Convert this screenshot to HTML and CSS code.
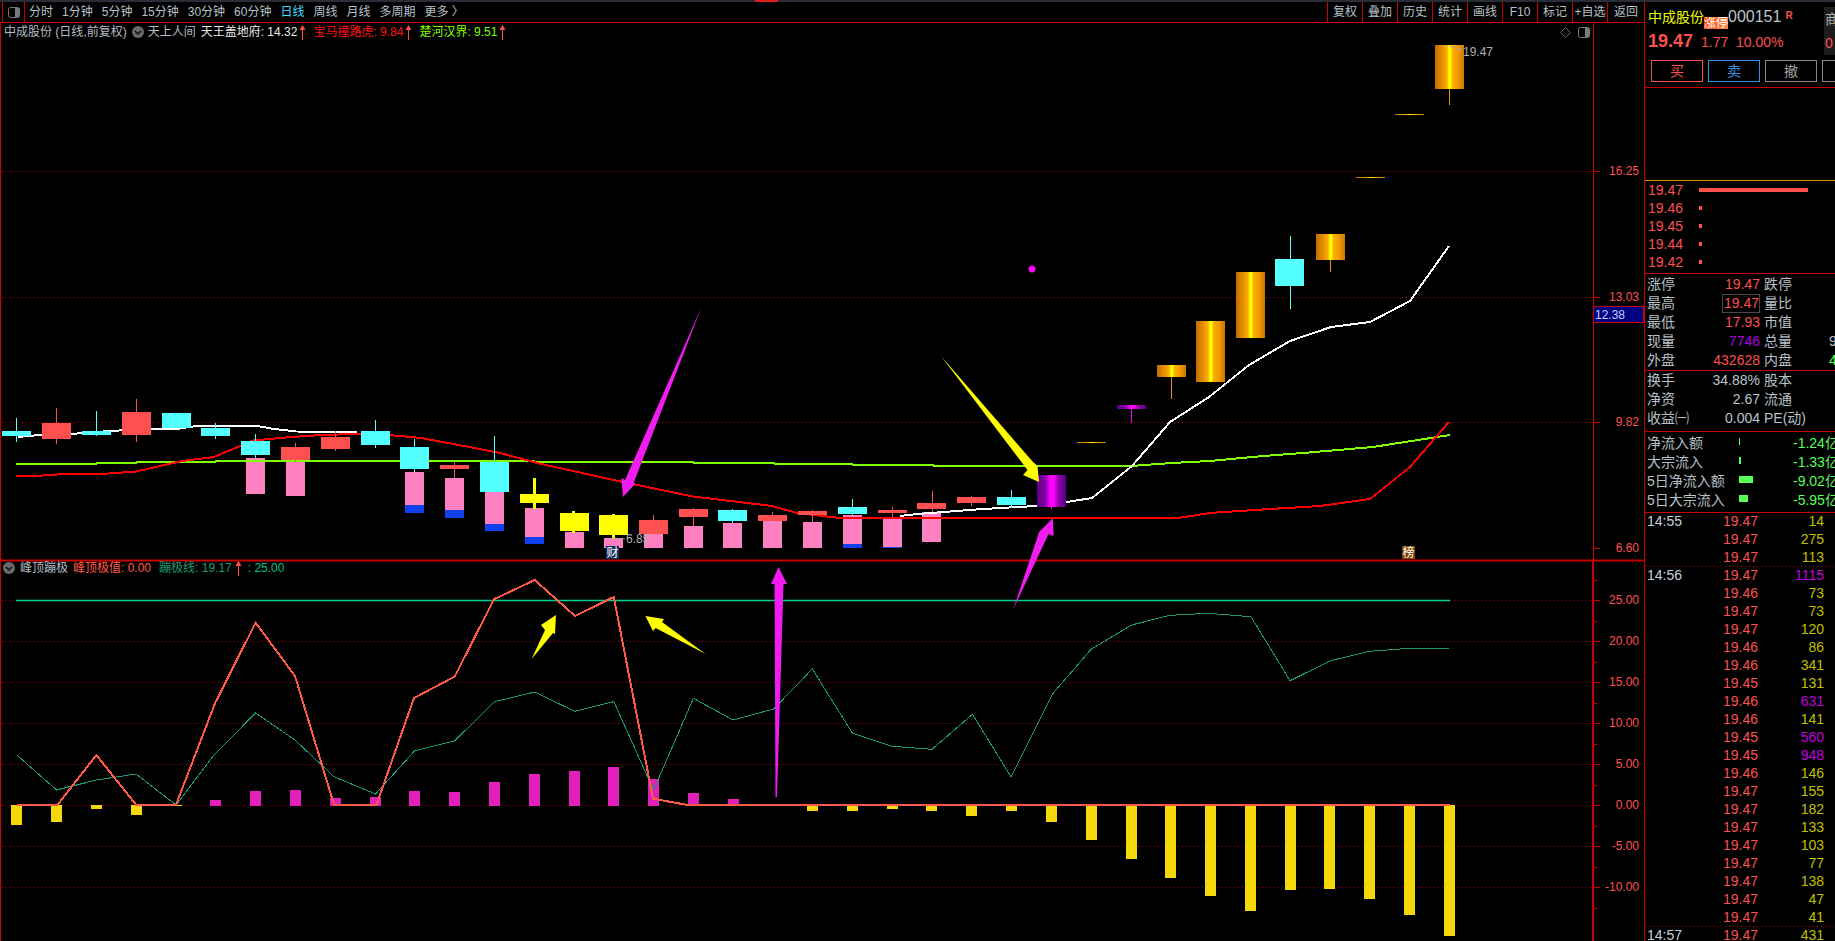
FILE: index.html
```html
<!DOCTYPE html>
<html lang="zh">
<head>
<meta charset="utf-8">
<title>中成股份 日线</title>
<link rel="stylesheet" href="styles.css">
</head>
<body>
<div class="app">
  <div class="stripe"><span class="stripe-mark"></span></div>
  <div class="main">
    <div class="left">
      <nav class="toolbar">
        <span class="tool-icon">
          <svg width="12" height="11" viewBox="0 0 12 11"><rect x="0.5" y="0.5" width="11" height="10" rx="2" fill="none" stroke="#7a7a7a"/><rect x="7" y="1" width="4" height="9" fill="#7a7a7a"/></svg>
        </span>
        <div class="periods">
          <span>分时</span><span>1分钟</span><span>5分钟</span><span>15分钟</span><span>30分钟</span><span>60分钟</span><span class="active">日线</span><span>周线</span><span>月线</span><span>多周期</span><span>更多 〉</span>
        </div>
        <div class="actions">
          <span>复权</span><span>叠加</span><span>历史</span><span>统计</span><span>画线</span><span>F10</span><span>标记</span><span>+自选</span><span>返回</span>
        </div>
      </nav>
      <div class="chart">
        <svg class="plot" width="1644" height="918" viewBox="0 23 1644 918" xmlns="http://www.w3.org/2000/svg">
          <defs>
            <linearGradient id="gold" x1="0" x2="1" y1="0" y2="0">
              <stop offset="0" stop-color="#c06c00"/><stop offset="0.25" stop-color="#e89000"/><stop offset="0.42" stop-color="#ffb000"/><stop offset="0.48" stop-color="#ffff00"/><stop offset="0.54" stop-color="#ffff00"/><stop offset="0.6" stop-color="#ffb000"/><stop offset="0.8" stop-color="#f09800"/><stop offset="1" stop-color="#c87800"/>
            </linearGradient>
            <linearGradient id="violet" x1="0" x2="1" y1="0" y2="0">
              <stop offset="0" stop-color="#560088"/><stop offset="0.3" stop-color="#8a00a8"/><stop offset="0.45" stop-color="#ff00ff"/><stop offset="0.58" stop-color="#ff00ff"/><stop offset="0.75" stop-color="#8a00a8"/><stop offset="1" stop-color="#560088"/>
            </linearGradient>
          </defs>

          <g class="dots">
            <line x1="2" x2="1593" y1="171.5" y2="171.5"/><line x1="2" x2="1593" y1="297.5" y2="297.5"/><line x1="2" x2="1593" y1="422.5" y2="422.5"/>
            <line x1="2" x2="1593" y1="600.5" y2="600.5"/><line x1="2" x2="1593" y1="641.5" y2="641.5"/><line x1="2" x2="1593" y1="682.5" y2="682.5"/><line x1="2" x2="1593" y1="723.5" y2="723.5"/><line x1="2" x2="1593" y1="764.5" y2="764.5"/><line x1="2" x2="1593" y1="805.5" y2="805.5"/><line x1="2" x2="1593" y1="846.5" y2="846.5"/><line x1="2" x2="1593" y1="887.5" y2="887.5"/>
          </g>

          <g class="frame">
            <line x1="0.5" x2="0.5" y1="23" y2="941"/>
            <line x1="1593.5" x2="1593.5" y1="23" y2="560"/>
            <line x1="1593" x2="1593" y1="560" y2="941" stroke-width="2"/>
            <line x1="0" x2="1644" y1="560.5" y2="560.5" stroke-width="2"/>
            <line x1="1594" x2="1600" y1="171.5" y2="171.5"/><line x1="1594" x2="1600" y1="297.5" y2="297.5"/><line x1="1594" x2="1600" y1="422.5" y2="422.5"/><line x1="1594" x2="1600" y1="548.5" y2="548.5"/>
            <line x1="1594" x2="1600" y1="600.5" y2="600.5"/><line x1="1594" x2="1600" y1="641.5" y2="641.5"/><line x1="1594" x2="1600" y1="682.5" y2="682.5"/><line x1="1594" x2="1600" y1="723.5" y2="723.5"/><line x1="1594" x2="1600" y1="764.5" y2="764.5"/><line x1="1594" x2="1600" y1="805.5" y2="805.5"/><line x1="1594" x2="1600" y1="846.5" y2="846.5"/><line x1="1594" x2="1600" y1="887.5" y2="887.5"/>
            <line x1="1594" x2="1597" y1="580.5" y2="580.5"/><line x1="1594" x2="1597" y1="621.5" y2="621.5"/><line x1="1594" x2="1597" y1="662.5" y2="662.5"/><line x1="1594" x2="1597" y1="703.5" y2="703.5"/><line x1="1594" x2="1597" y1="744.5" y2="744.5"/><line x1="1594" x2="1597" y1="785.5" y2="785.5"/><line x1="1594" x2="1597" y1="826.5" y2="826.5"/><line x1="1594" x2="1597" y1="867.5" y2="867.5"/><line x1="1594" x2="1597" y1="908.5" y2="908.5"/>
          </g>

          <g class="axis">
            <text x="1639" y="175">16.25</text><text x="1639" y="301">13.03</text><text x="1639" y="426">9.82</text><text x="1639" y="552">6.60</text>
            <text x="1639" y="604">25.00</text><text x="1639" y="645">20.00</text><text x="1639" y="686">15.00</text><text x="1639" y="727">10.00</text><text x="1639" y="768">5.00</text><text x="1639" y="809">0.00</text><text x="1639" y="850">-5.00</text><text x="1639" y="891">-10.00</text>
          </g>
          <rect class="last-box" x="1593.5" y="306.5" width="50" height="16"/>
          <text class="last-text" x="1595" y="319">12.38</text>

          <g class="pink">
            <rect x="246" y="458" width="19" height="36"/><rect x="286" y="462" width="19" height="34"/><rect x="405" y="472" width="19" height="33"/><rect x="445" y="478" width="19" height="32"/><rect x="485" y="492" width="19" height="32"/><rect x="525" y="508" width="19" height="29"/><rect x="565" y="532" width="19" height="16"/><rect x="604" y="538" width="19" height="10"/><rect x="644" y="534" width="19" height="14"/><rect x="684" y="526" width="19" height="22"/><rect x="723" y="523" width="19" height="25"/><rect x="763" y="521" width="19" height="27"/><rect x="803" y="522" width="19" height="26"/><rect x="843" y="515" width="19" height="29"/><rect x="883" y="518" width="19" height="29"/><rect x="922" y="512" width="19" height="30"/>
          </g>
          <g class="blue">
            <rect x="405" y="505" width="19" height="8"/><rect x="445" y="510" width="19" height="8"/><rect x="485" y="524" width="19" height="7"/><rect x="525" y="537" width="19" height="7"/><rect x="843" y="544" width="19" height="4"/><rect x="883" y="547" width="19" height="1"/>
          </g>

          <polyline class="ln-green" points="16,464.5 96,464 97,463 136,463 137,462 215,462 216,461 534,461 535,462 693,462 694,463 774,463 775,464 852,464 853,465 933,465 934,466 1131,466 1172,463 1210,461 1263,456 1303,453 1373,447 1450,435"/>
          <polyline class="ln-red" points="16,476 36,476 57,474.5 109,473.5 136,471.5 182,461 214,457 253,440.5 286,437.5 321,435 357,434 389,435 421,438 464,446 500,453 540,463.7 618,481 693,496.5 772,506 797,513 840,518 1178,518 1210,513 1270,509 1320,506 1370,499 1410,467 1449,422"/>
          <polyline class="ln-white" points="18,437 39,435 71,434 109,431 150,429 177,429 189,427 202,425.5 255,425.5 271,428.5 296,431.5 357,432"/>
          <polyline class="ln-white" points="900,516 918,514 944,512 983,509 1036,506 1067,502 1092,498 1132,466 1170,422 1209,397 1249,365 1290,341 1331,327 1370,322 1410,301 1449,246"/>

          <g class="cyan">
            <rect x="16" y="418" width="1" height="24"/><rect x="2" y="431" width="29" height="5"/>
            <rect x="96" y="411" width="1" height="25"/><rect x="82" y="431" width="29" height="4"/>
            <rect x="162" y="413" width="29" height="15"/>
            <rect x="215" y="423" width="1" height="16"/><rect x="201" y="428" width="29" height="8"/>
            <rect x="255" y="434" width="1" height="24"/><rect x="241" y="441" width="29" height="14"/>
            <rect x="375" y="420" width="1" height="28"/><rect x="361" y="431" width="29" height="14"/>
            <rect x="414" y="439" width="1" height="33"/><rect x="400" y="447" width="29" height="22"/>
            <rect x="494" y="436" width="1" height="26"/><rect x="480" y="462" width="29" height="30"/>
            <rect x="732" y="509" width="1" height="14"/><rect x="718" y="510" width="29" height="11"/>
            <rect x="852" y="499" width="1" height="16"/><rect x="838" y="507" width="29" height="7"/>
            <rect x="1011" y="490" width="1" height="18"/><rect x="997" y="497" width="29" height="8"/>
            <rect x="1290" y="236" width="1" height="73"/><rect x="1275" y="259" width="29" height="27"/>
          </g>
          <g class="red">
            <rect x="56" y="408" width="1" height="36"/><rect x="42" y="423" width="29" height="16"/>
            <rect x="136" y="399" width="1" height="43"/><rect x="122" y="412" width="29" height="23"/>
            <rect x="295" y="443" width="1" height="19"/><rect x="281" y="447" width="29" height="13"/>
            <rect x="335" y="431" width="1" height="20"/><rect x="321" y="437" width="29" height="12"/>
            <rect x="454" y="462" width="1" height="16"/><rect x="440" y="465" width="29" height="4"/>
            <rect x="653" y="515" width="1" height="5"/><rect x="639" y="520" width="29" height="14"/>
            <rect x="693" y="508" width="1" height="18"/><rect x="679" y="509" width="29" height="8"/>
            <rect x="772" y="512" width="1" height="3"/><rect x="758" y="515" width="29" height="6"/>
            <rect x="812" y="510" width="1" height="12"/><rect x="798" y="511" width="29" height="4"/>
            <rect x="892" y="507" width="1" height="11"/><rect x="878" y="510" width="29" height="3"/>
            <rect x="932" y="491" width="1" height="21"/><rect x="917" y="503" width="29" height="6"/>
            <rect x="971" y="496" width="1" height="10"/><rect x="957" y="497" width="29" height="6"/>
          </g>
          <g class="yellow">
            <rect x="533" y="478" width="3" height="31"/><rect x="520" y="494" width="29" height="9"/>
            <rect x="572" y="511" width="3" height="22"/><rect x="560" y="513" width="29" height="18"/>
            <rect x="612" y="514" width="3" height="25"/><rect x="599" y="515" width="29" height="20"/>
          </g>
          <rect class="f-violet" x="1037" y="475" width="29" height="32"/>
          <rect class="magenta" x="1051" y="507" width="1" height="2"/>
          <rect class="f-gold" x="1077" y="442" width="29" height="1"/>
          <rect class="magenta" x="1131" y="409" width="1" height="14"/>
          <rect class="f-violet" x="1117" y="405" width="29" height="4"/>
          <circle class="magenta" cx="1032" cy="269" r="3.5"/>
          <rect class="orange" x="1171" y="377" width="1" height="22"/>
          <rect class="f-gold" x="1157" y="365" width="29" height="12"/>
          <rect class="f-gold" x="1196" y="321" width="29" height="61"/>
          <rect class="f-gold" x="1236" y="272" width="29" height="66"/>
          <rect class="orange" x="1330" y="260" width="1" height="12"/>
          <rect class="f-gold" x="1316" y="234" width="29" height="26"/>
          <rect class="f-gold" x="1356" y="177" width="29" height="1"/>
          <rect class="f-gold" x="1395" y="114" width="29" height="1"/>
          <rect class="orange" x="1449" y="89" width="1" height="16"/>
          <rect class="f-gold" x="1435" y="45" width="29" height="44"/>

          <polyline class="note-line" points="1449,46 1462,50"/>
          <text class="note" x="1463" y="56">19.47</text>
          <polyline class="note-line" points="612,538 625,539"/>
          <text class="note" x="626" y="543">6.85</text>

          <rect class="badge-cai" x="606" y="546" width="13" height="13"/>
          <text class="badge-text" x="606.5" y="557">财</text>
          <rect class="badge-bang" x="1402" y="546" width="13" height="13"/>
          <text class="badge-text" x="1402.5" y="557">榜</text>

          <g class="bar-y">
            <rect x="11" y="805" width="11" height="20"/><rect x="51" y="805" width="11" height="17"/><rect x="91" y="805" width="11" height="4"/><rect x="131" y="805" width="11" height="10"/><rect x="171" y="805" width="11" height="1"/>
            <rect x="767" y="805" width="11" height="1"/><rect x="807" y="805" width="11" height="6"/><rect x="847" y="805" width="11" height="6"/><rect x="887" y="805" width="11" height="4"/><rect x="926" y="805" width="11" height="6"/><rect x="966" y="805" width="11" height="11"/><rect x="1006" y="805" width="11" height="6"/><rect x="1046" y="805" width="11" height="17"/><rect x="1086" y="805" width="11" height="35"/><rect x="1126" y="805" width="11" height="54"/><rect x="1165" y="805" width="11" height="73"/><rect x="1205" y="805" width="11" height="91"/><rect x="1245" y="805" width="11" height="106"/><rect x="1285" y="805" width="11" height="85"/><rect x="1324" y="805" width="11" height="84"/><rect x="1364" y="805" width="11" height="94"/><rect x="1404" y="805" width="11" height="110"/><rect x="1444" y="805" width="11" height="131"/>
          </g>
          <g class="bar-m">
            <rect x="210" y="800" width="11" height="6"/><rect x="250" y="791" width="11" height="15"/><rect x="290" y="790" width="11" height="16"/><rect x="330" y="798" width="11" height="8"/><rect x="370" y="797" width="11" height="9"/><rect x="409" y="791" width="11" height="15"/><rect x="449" y="792" width="11" height="14"/><rect x="489" y="782" width="11" height="24"/><rect x="529" y="774" width="11" height="32"/><rect x="569" y="771" width="11" height="35"/><rect x="608" y="767" width="11" height="39"/><rect x="648" y="779" width="11" height="27"/><rect x="688" y="793" width="11" height="13"/><rect x="728" y="799" width="11" height="7"/>
          </g>

          <line class="ln-hline" x1="16" x2="1450" y1="600.5" y2="600.5"/>
          <polyline class="ln-teal" points="16.8,755 56.6,790 96.4,780 136,774 176,805 214,755 255.6,713 295,740 334,776.7 375.5,794 414.8,750.7 454.6,741 494.4,701.7 534.7,692 574.5,711.3 613.8,701.7 653.6,790 693.4,698.3 733,720 773.5,709 800,682 812.2,668.7 852.5,733.3 892.3,746.3 932,749.3 972.4,714.3 1011,776.7 1052.5,694 1091,649.3 1131.6,625 1170,615.3 1208,613.3 1251,616.7 1290,680.7 1330.6,660.7 1369,651.3 1404.6,648.7 1449,648.3"/>
          <polyline class="ln-salmon" points="16.8,804.7 57.6,804.7 96.4,755 136,804.7 176,804.7 215,703.3 255.6,622.7 295,676 334,804.7 376.5,804.7 414,698 454.6,676.7 494,599.3 534.7,580 575,616 613.8,597 653,798.7 686,804.7 1450,804.7"/>

          <g class="arrow-m">
            <polygon points="702,306 634,482 635,484 623,497 621.4,478 625,480"/>
            <polygon points="778.5,567 787,584 783.5,584 777,797 775.5,797 774.5,584 771,584"/>
            <polygon points="1013,610 1048.5,534 1053.6,536 1053,518 1039,532 1038.5,534"/>
          </g>
          <g class="arrow-y">
            <polygon points="941,356 1033,462 1037.5,466 1039,482 1023,475 1027.5,470"/>
            <polygon points="531.6,659 553,633 555,634 556,615 541,625 545,630"/>
            <polygon points="705.6,654 662,622 664,619 645.4,616 653,631 655.6,628"/>
          </g>
        </svg>

        <div class="legend legend-main">
          <span class="c-grey">中成股份 (日线,前复权)</span>
          <svg class="chev" width="12" height="12" viewBox="0 0 12 12"><circle cx="6" cy="6" r="6" fill="#6a6a6a"/><polyline points="3,5 6,8 9,5" fill="none" stroke="#111" stroke-width="1.5"/></svg>
          <span class="c-grey">天上人间</span>
          <span class="c-white">天王盖地府: 14.32</span><svg class="up" width="7" height="15" viewBox="0 0 7 15"><path d="M3.5 0 6.5 5H4V15H3V5H.5Z"/></svg>
          <span class="c-red">宝马撞路虎: 9.84</span><svg class="up" width="7" height="15" viewBox="0 0 7 15"><path d="M3.5 0 6.5 5H4V15H3V5H.5Z"/></svg>
          <span class="c-lime">楚河汉界: 9.51</span><svg class="up" width="7" height="15" viewBox="0 0 7 15"><path d="M3.5 0 6.5 5H4V15H3V5H.5Z"/></svg>
        </div>
        <div class="chart-tools">
          <svg width="11" height="11" viewBox="0 0 11 11"><polygon points="5.5,0.5 10.5,5.5 5.5,10.5 0.5,5.5" fill="none" stroke="#666"/></svg>
          <svg width="12" height="11" viewBox="0 0 12 11"><rect x="0.5" y="0.5" width="11" height="10" rx="2" fill="none" stroke="#7a7a7a"/><rect x="7" y="1" width="4" height="9" fill="#7a7a7a"/></svg>
        </div>
        <div class="legend legend-sub">
          <svg class="chev" width="12" height="12" viewBox="0 0 12 12"><circle cx="6" cy="6" r="6" fill="#6a6a6a"/><polyline points="3,5 6,8 9,5" fill="none" stroke="#111" stroke-width="1.5"/></svg>
          <span class="c-grey">峰顶蹦极</span>
          <span class="c-salmon">峰顶极值: 0.00</span>
          <span class="c-teal">蹦极线: 19.17</span><svg class="up" width="7" height="15" viewBox="0 0 7 15"><path d="M3.5 0 6.5 5H4V15H3V5H.5Z"/></svg>
          <span class="c-mint">: 25.00</span>
        </div>
      </div>
    </div>

    <aside class="side">
      <section class="quote">
        <div class="q-name">
          <span class="name">中成股份</span><span class="limit">涨停</span><span class="code">000151</span><span class="r-mark">R</span>
        </div>
        <div class="q-price">
          <span class="big">19.47</span><span class="chg">1.77</span><span class="pct">10.00%</span>
        </div>
        <div class="q-btns">
          <span class="btn buy">买</span><span class="btn sell">卖</span><span class="btn cancel">撤</span><span class="btn cancel"></span>
        </div>
        <div class="merchant"><span class="m1">商</span><span class="m2">0</span></div>
      </section>
      <section class="asks"></section>
      <section class="depth">
        <div class="d-row"><span class="d-p">19.47</span><i class="d-bar" style="width:109px"></i></div>
        <div class="d-row"><span class="d-p">19.46</span><i class="d-bar" style="width:3px"></i></div>
        <div class="d-row"><span class="d-p">19.45</span><i class="d-bar" style="width:3px"></i></div>
        <div class="d-row"><span class="d-p">19.44</span><i class="d-bar" style="width:3px"></i></div>
        <div class="d-row"><span class="d-p">19.42</span><i class="d-bar" style="width:3px"></i></div>
      </section>
      <section class="stats s-five">
        <div class="s-row"><span class="k">涨停</span><span class="v c-p">19.47</span><span class="k2">跌停</span></div>
        <div class="s-row"><span class="k">最高</span><span class="v c-p"><b class="boxed">19.47</b></span><span class="k2">量比</span></div>
        <div class="s-row"><span class="k">最低</span><span class="v c-p">17.93</span><span class="k2">市值</span></div>
        <div class="s-row"><span class="k">现量</span><span class="v c-v">7746</span><span class="k2">总量</span><span class="x c-w">9</span></div>
        <div class="s-row"><span class="k">外盘</span><span class="v c-p">432628</span><span class="k2">内盘</span><span class="x c-g">4</span></div>
      </section>
      <section class="stats s-three">
        <div class="s-row"><span class="k">换手</span><span class="v c-w">34.88%</span><span class="k2">股本</span></div>
        <div class="s-row"><span class="k">净资</span><span class="v c-w">2.67</span><span class="k2">流通</span></div>
        <div class="s-row"><span class="k">收益㈠</span><span class="v c-w">0.004</span><span class="k2">PE(动)</span></div>
      </section>
      <section class="flow">
        <div class="f-row"><span class="f-k">净流入额</span><span class="f-track"><i class="f-bar" style="width:1px"></i></span><span class="f-v">-1.24亿</span></div>
        <div class="f-row"><span class="f-k">大宗流入</span><span class="f-track"><i class="f-bar" style="width:2px"></i></span><span class="f-v">-1.33亿</span></div>
        <div class="f-row"><span class="f-k">5日净流入额</span><span class="f-track"><i class="f-bar" style="width:14px"></i></span><span class="f-v">-9.02亿</span></div>
        <div class="f-row"><span class="f-k">5日大宗流入</span><span class="f-track"><i class="f-bar" style="width:9px"></i></span><span class="f-v">-5.95亿</span></div>
      </section>
      <section class="ticks">
        <div class="group">
          <div class="t-row"><span class="t">14:55</span><span class="p">19.47</span><span class="q">14</span></div>
          <div class="t-row"><span class="t"></span><span class="p">19.47</span><span class="q">275</span></div>
          <div class="t-row"><span class="t"></span><span class="p">19.47</span><span class="q">113</span></div>
        </div>
        <div class="group dotted">
          <div class="t-row"><span class="t">14:56</span><span class="p">19.47</span><span class="q big-q">1115</span></div>
          <div class="t-row"><span class="t"></span><span class="p">19.46</span><span class="q">73</span></div>
          <div class="t-row"><span class="t"></span><span class="p">19.47</span><span class="q">73</span></div>
          <div class="t-row"><span class="t"></span><span class="p">19.47</span><span class="q">120</span></div>
          <div class="t-row"><span class="t"></span><span class="p">19.46</span><span class="q">86</span></div>
          <div class="t-row"><span class="t"></span><span class="p">19.46</span><span class="q">341</span></div>
          <div class="t-row"><span class="t"></span><span class="p">19.45</span><span class="q">131</span></div>
          <div class="t-row"><span class="t"></span><span class="p">19.46</span><span class="q big-q">631</span></div>
          <div class="t-row"><span class="t"></span><span class="p">19.46</span><span class="q">141</span></div>
          <div class="t-row"><span class="t"></span><span class="p">19.45</span><span class="q big-q">560</span></div>
          <div class="t-row"><span class="t"></span><span class="p">19.45</span><span class="q big-q">948</span></div>
          <div class="t-row"><span class="t"></span><span class="p">19.46</span><span class="q">146</span></div>
          <div class="t-row"><span class="t"></span><span class="p">19.47</span><span class="q">155</span></div>
          <div class="t-row"><span class="t"></span><span class="p">19.47</span><span class="q">182</span></div>
          <div class="t-row"><span class="t"></span><span class="p">19.47</span><span class="q">133</span></div>
          <div class="t-row"><span class="t"></span><span class="p">19.47</span><span class="q">103</span></div>
          <div class="t-row"><span class="t"></span><span class="p">19.47</span><span class="q">77</span></div>
          <div class="t-row"><span class="t"></span><span class="p">19.47</span><span class="q">138</span></div>
          <div class="t-row"><span class="t"></span><span class="p">19.47</span><span class="q">47</span></div>
          <div class="t-row"><span class="t"></span><span class="p">19.47</span><span class="q">41</span></div>
        </div>
        <div class="group dotted">
          <div class="t-row"><span class="t">14:57</span><span class="p">19.47</span><span class="q">431</span></div>
        </div>
      </section>
    </aside>
  </div>
</div>
</body>
</html>
```

FILE: styles.css
```css
* { box-sizing: border-box; }
html, body { margin: 0; padding: 0; height: 100%; background: #000; }
body {
  font-family: "Liberation Sans", "Noto Sans CJK SC", sans-serif;
  font-size: 12px;
  color: #b8c0c8;
  overflow: hidden;
}
.app { width: 1835px; height: 941px; display: flex; flex-direction: column; overflow: hidden; }
.stripe { height: 2px; background: #2a2d35; flex: none; display: flex; }
.stripe-mark { width: 23px; height: 2px; margin-left: 755px; background: #e02020; }
.main { flex: 1; display: flex; min-height: 0; }
.left { width: 1644px; flex: none; display: flex; flex-direction: column; }

.toolbar {
  height: 21px; flex: none; display: flex; align-items: stretch;
  border-bottom: 1px solid #d00000; line-height: 20px; white-space: nowrap;
}
.tool-icon {
  width: 23px; margin-left: 2px; flex: none; display: flex; align-items: center; justify-content: center;
  border-left: 1px solid #c80000; border-right: 1px solid #c80000;
}
.periods { display: flex; gap: 9px; padding-left: 4px; }
.periods .active { color: #40dcff; }
.actions { margin-left: auto; display: flex; }
.actions span {
  width: 35px; text-align: center; border-left: 1px solid #c80000; flex: none;
}
.actions span:last-child { width: 37px; }

.chart { position: relative; flex: 1; min-height: 0; overflow: hidden; }
.plot { display: block; }
.legend {
  position: absolute; left: 4px; display: flex; align-items: center; white-space: nowrap;
  height: 16px; line-height: 16px;
}
.legend-main { top: 1px; }
.legend-main .chev { margin: 0 4px 0 0; }
.legend-main span { margin-right: 5px; }
.legend-main .up { margin: 0 3px 0 -3px; }
.legend-main .c-red, .legend-main .c-lime { margin-left: 4px; }
.legend-sub { top: 537px; left: 3px; }
.legend-sub .chev { margin-right: 5px; }
.legend-sub .c-grey { margin-right: 5px; }
.legend-sub .c-salmon { margin-right: 8px; }
.legend-sub .up { margin: 0 6px 0 3px; }
.up { flex: none; }
.up path { fill: #ff5050; }
.c-grey { color: #b4bcc4; }
.c-white { color: #e8e8e8; }
.c-red { color: #ff1010; }
.c-lime { color: #80ff00; }
.c-salmon { color: #ff5a46; }
.c-teal { color: #1a9a78; }
.c-mint { color: #00c088; }
.chart-tools { position: absolute; top: 4px; left: 1560px; display: flex; gap: 7px; align-items: center; }

/* chart drawing */
.dots line { stroke: #c00000; stroke-width: 1; stroke-dasharray: 1 3; }
.frame line { stroke: #c80000; stroke-width: 1; }
.frame line[stroke-width="2"] { stroke-width: 2; }
.axis text { fill: #ff5050; font-size: 12px; text-anchor: end; }
.last-box { fill: #000080; stroke: #c80000; }
.last-text { fill: #c0d0ff; font-size: 12px; }
.pink rect { fill: #ff80c0; }
.blue rect { fill: #1040f0; }
.cyan rect { fill: #54ffff; }
.red rect { fill: #ff5050; }
.yellow rect { fill: #ffff00; }
.magenta { fill: #ff00ff; }
.orange { fill: #f09000; }
.f-gold { fill: url(#gold); }
.f-violet { fill: url(#violet); }
.ln-green, .ln-red, .ln-white, .ln-teal, .ln-salmon { fill: none; shape-rendering: crispEdges; }
.ln-green { stroke: #80ff00; stroke-width: 2; }
.ln-red { stroke: #ff0000; stroke-width: 2; }
.ln-white { stroke: #ffffff; stroke-width: 2; }
.ln-teal { stroke: #1a9a78; stroke-width: 1; }
.ln-salmon { stroke: #ff5a46; stroke-width: 2; }
.ln-hline { stroke: #00d090; stroke-width: 1.5; }
.note-line { fill: none; stroke: #a8a8a8; stroke-width: 1; }
.note { fill: #b0b0b0; font-size: 12px; }
.badge-cai { fill: #103060; }
.badge-bang { fill: #804000; }
.badge-text { fill: #ffffff; font-size: 12px; }
.bar-y rect { fill: #f5d80a; }
.bar-m rect { fill: #e020b8; }
.arrow-m polygon { fill: #f01cf0; }
.arrow-y polygon { fill: #ffff00; }

/* side panel */
.side {
  width: 191px; flex: none; border-left: 1px solid #c80000; overflow: hidden;
  font-size: 14px; white-space: nowrap; position: relative;
}
.quote { height: 86px; border-bottom: 1px solid #c80000; padding: 6px 0 0 3px; position: relative; }
.q-name { display: flex; height: 18px; line-height: 18px; align-items: center; }
.name { font-size: 14px; color: #f0ff00; }
.limit {
  font-size: 12px; line-height: 12px; height: 12px; width: 24px; margin-top: 11px; color: #fff;
  background: linear-gradient(100deg, #ff4a10, #ff8a50);
  display: block; text-align: center; overflow: hidden;
}
.code { font-size: 16px; color: #b8c4cc; }
.r-mark { font-size: 10px; font-weight: bold; color: #ff5050; margin-left: 4px; margin-top: -3px; }
.q-price { display: flex; height: 22px; line-height: 22px; margin-top: 4px; align-items: baseline; color: #ff5050; }
.big { font-size: 18px; font-weight: bold; width: 53px; }
.chg { width: 35px; }
.q-btns { display: flex; gap: 5px; margin-top: 8px; padding-left: 3px; }
.btn { width: 52px; height: 22px; line-height: 20px; text-align: center; border: 1px solid #888; flex: none; color: #a0a0a0; }
.btn.buy { border-color: #ff5050; color: #ff5050; }
.btn.sell { border-color: #3a90e0; color: #3a90e0; }
.merchant {
  position: absolute; top: 5px; left: 179px; width: 12px; height: 48px; background: #1c1c1c;
  display: flex; flex-direction: column; padding-left: 1px;
}
.m1 { color: #b0b0b0; height: 25px; line-height: 24px; }
.m2 { color: #ff5050; line-height: 24px; }
.asks { height: 93px; border-bottom: 1px solid #e09000; }
.depth { height: 93px; border-bottom: 1px solid #c80000; }
.d-row { display: flex; align-items: center; height: 18px; padding-left: 3px; color: #ff5050; }
.d-p { width: 51px; flex: none; }
.d-bar { display: block; height: 4px; background: #ff5050; flex: none; }
.stats { padding-left: 2px; border-bottom: 1px solid #c80000; }
.s-five { height: 97px; padding-top: 1px; }
.s-three { height: 61px; }
.s-row { display: flex; height: 19px; line-height: 19px; }
.k { width: 28px; flex: none; color: #b8c0c8; overflow: visible; white-space: nowrap; }
.v { width: 85px; flex: none; text-align: right; }
.k2 { margin-left: 4px; width: 28px; flex: none; color: #b8c0c8; white-space: nowrap; }
.x { margin-left: 37px; flex: none; }
.boxed { font-weight: normal; display: inline-block; height: 19px; padding: 0 1px 0 2px; outline: 1px solid #484848; outline-offset: -1px; }
.c-p { color: #ff5050; }
.c-v { color: #b000e0; }
.c-w { color: #b8c4cc; }
.c-g { color: #55ff55; }
.flow { height: 81px; padding-left: 2px; border-bottom: 1px solid #c80000; }
.f-row { display: flex; align-items: center; height: 19px; }
.f-k { width: 92px; flex: none; color: #b8c0c8; }
.f-track { width: 54px; flex: none; display: flex; }
.f-bar { display: block; height: 7px; background: #55ff55; }
.f-v { color: #55ff55; flex: none; }
.ticks { margin-top: -1px; }
.group.dotted {
  background: repeating-linear-gradient(90deg, #c00000 0 1px, transparent 1px 4px) top left / 100% 1px no-repeat;
}
.t-row { display: flex; height: 18px; line-height: 18px; }
.t { width: 78px; flex: none; padding-left: 2px; color: #c8d0d8; }
.p { width: 35px; flex: none; color: #ff5050; }
.q { width: 66px; flex: none; text-align: right; color: #c0c000; }
.big-q { color: #c000e0; }
```
